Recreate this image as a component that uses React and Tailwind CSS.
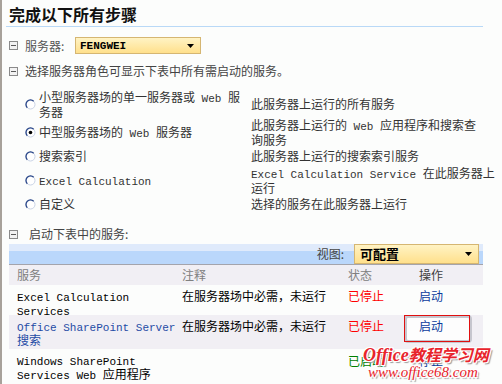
import React from "react";

const L = ({ children }) => (
  <span className="font-['Liberation_Mono','Noto_Sans_CJK_SC',monospace] text-[11px] leading-none">{children}</span>
);

const Toggle = () => (
  <svg width="9" height="9" viewBox="0 0 9 9" className="shrink-0">
    <rect x="0.5" y="0.5" width="8" height="8" fill="#f3f3f3" stroke="#8a8a8a" />
    <rect x="2" y="4" width="5" height="1" fill="#5a5a5a" />
  </svg>
);

const Radio = ({ checked }) => (
  <svg width="11" height="11" viewBox="0 0 11 11" className="shrink-0">
    <circle cx="5.5" cy="5.5" r="4.5" fill="#fff" stroke="#c9d3e6" strokeWidth="1" />
    <path d="M2.3 8.7 A4.5 4.5 0 0 1 8.7 2.3" fill="none" stroke="#2a4789" strokeWidth="1.3" />
    {checked && <circle cx="5.5" cy="5.5" r="1.8" fill="#000" />}
  </svg>
);

const Arrow = () => (
  <svg width="7" height="4" viewBox="0 0 7 4" className="shrink-0">
    <polygon points="0,0 7,0 3.5,4" fill="#000" />
  </svg>
);

const options = [
  {
    checked: false,
    h: "h-[28px]",
    left: (
      <>
        小型服务器场的单一服务器或<L> Web </L>服<br />务器
      </>
    ),
    right: <>此服务器上运行的所有服务</>,
  },
  {
    checked: true,
    h: "h-[28px]",
    left: (
      <>
        中型服务器场的<L> Web </L>服务器
      </>
    ),
    right: (
      <>
        此服务器上运行的<L> Web </L>应用程序和搜索查<br />询服务
      </>
    ),
  },
  { checked: false, h: "h-[20px]", left: <>搜索索引</>, right: <>此服务器上运行的搜索索引服务</> },
  {
    checked: false,
    h: "h-[28px]",
    left: <L>Excel Calculation</L>,
    right: (
      <>
        <L>Excel Calculation Service </L>在此服务器上<br />运行
      </>
    ),
  },
  { checked: false, h: "h-[20px]", left: <>自定义</>, right: <>选择的服务在此服务器上运行</> },
];

export default function App() {
  return (
    <div className="relative w-[502px] h-[384px] overflow-hidden bg-[#fcfdfc] border-l-2 border-[#a7a19a] font-['Noto_Sans_CJK_SC',sans-serif] text-[12px] leading-[14px] text-[#333]">
      {/* Title */}
      <div className="ml-[4px] w-[477px] border-b border-[#b9d9f7] pt-[4px] pl-[3px] pb-[2px]">
        <h1 className="text-[16px] leading-[20px] font-bold text-[#111]">完成以下所有步骤</h1>
      </div>

      {/* Server row */}
      <div className="mt-[10px] flex items-center h-[17px] pl-[7px]">
        <Toggle />
        <span className="ml-[7px] w-[50px] text-[#555]">服务器:</span>
        <div className="w-[126px] h-[17px] border border-[#d5b672] bg-[linear-gradient(#fff3c4,#ffe08c)] flex items-center justify-between pl-[4px] pr-[6px]">
          <span className="font-['Liberation_Mono',monospace] font-bold text-[11px] leading-[12px] text-black">FENGWEI</span>
          <Arrow />
        </div>
      </div>

      {/* Role description */}
      <div className="mt-[10px] flex items-center h-[14px] pl-[7px]">
        <Toggle />
        <span className="ml-[7px] text-[#444]">选择服务器角色可显示下表中所有需启动的服务。</span>
      </div>

      {/* Options */}
      <div className="mt-[12px] flex flex-col pl-[23px]">
        {options.map((o, i) => (
          <div key={i} className={`flex items-center ${o.h}`}>
            <div className="w-[226px] flex items-center gap-[3px] whitespace-nowrap">
              <Radio checked={o.checked} />
              <span className="text-[#333]">{o.left}</span>
            </div>
            <div className="whitespace-nowrap text-[#333]">{o.right}</div>
          </div>
        ))}
      </div>

      {/* Start services */}
      <div className="mt-[13px] flex items-center h-[14px] pl-[7px]">
        <Toggle />
        <span className="ml-[11px] text-[#444]">启动下表中的服务:</span>
      </div>

      {/* Table */}
      <div className="mt-[3px] ml-[7px] w-[474px] leading-[12px]">
        <div className="h-[21px] border-b border-[#a4a4ac] bg-[linear-gradient(#dfeafb_0%,#dfeafb_35%,#bad7fb_35%,#bad7fb_100%)] flex items-center justify-end pr-[4px]">
          <span className="mr-[10px] text-[#444]">视图:</span>
          <div className="w-[125px] h-[20px] border border-[#d5b672] bg-[linear-gradient(#fff3c4,#ffe08c)] flex items-center justify-between pl-[5px] pr-[6px]">
            <span className="font-bold text-[13px] leading-[14px] text-black">可配置</span>
            <Arrow />
          </div>
        </div>

        <div className="h-[20px] bg-[#f1eff4] grid grid-cols-[165px_166px_64px_1fr] items-center">
          <span className="pl-[8px] text-[#808080]">服务</span>
          <span className="pl-[8px] text-[#808080]">注释</span>
          <span className="pl-[8px] text-[#808080]">状态</span>
          <span className="pl-[15px] text-[#404040]">操作</span>
        </div>

        <div className="h-[30px] pt-[5px] grid grid-cols-[165px_166px_64px_1fr] items-start text-black">
          <span className="pl-[8px] whitespace-nowrap">
            <L>Excel Calculation</L>
            <br />
            <L>Services</L>
          </span>
          <span className="pl-[8px] whitespace-nowrap">在服务器场中必需，未运行</span>
          <span className="pl-[8px] text-[#ff0000]">已停止</span>
          <span className="pl-[15px] text-[#0b3b9c]">启动</span>
        </div>

        <div className="h-[34px] bg-[#f1eff4] grid grid-cols-[165px_166px_64px_1fr] items-start text-black">
          <span className="pl-[8px] pt-[5px] whitespace-nowrap text-[#1f4ba5]">
            <L>Office SharePoint Server</L>
            <br />
            搜索
          </span>
          <span className="pl-[8px] pt-[5px] whitespace-nowrap">在服务器场中必需，未运行</span>
          <span className="pl-[8px] pt-[5px] text-[#ff0000]">已停止</span>
          <div className="relative">
            <div className="w-[68px] h-[28px] border-[3px] border-[#c6c6ce] rounded-[4px] bg-[#fdfdfd] pl-[12px] pt-[2px] text-[#0b3b9c]">
              启动
            </div>
            <div className="absolute left-0 top-0 w-[66px] h-[27px] border border-[#e01010]" />
          </div>
        </div>

        <div className="h-[40px] pt-[5px] grid grid-cols-[165px_166px_64px_1fr] items-start text-black">
          <span className="pl-[8px] whitespace-nowrap">
            <L>Windows SharePoint</L>
            <br />
            <L>Services Web </L>应用程序
          </span>
          <span className="pl-[8px]" />
          <span className="pl-[8px] pt-[1px] text-[#008000]">已启动</span>
          <span className="pl-[15px] pt-[1px] text-[#0b3b9c]">停止</span>
        </div>
      </div>

      {/* Watermark */}
      <div className="absolute left-[361px] top-[346px] italic text-[#e8242c] leading-none [text-shadow:1px_1px_0_#fff,-1px_-1px_0_#fff,1px_-1px_0_#fff,-1px_1px_0_#fff,2px_2px_1px_#999]">
        <div className="whitespace-nowrap font-bold">
          <span className="font-['Liberation_Serif',serif] text-[18px]">Office</span>
          <span className="font-['Noto_Sans_CJK_SC',sans-serif] text-[16px]">教程学习网</span>
        </div>
        <div className="mt-[1px] ml-[5px] whitespace-nowrap font-['Liberation_Serif',serif] text-[15px]">www.office68.com</div>
      </div>
    </div>
  );
}
